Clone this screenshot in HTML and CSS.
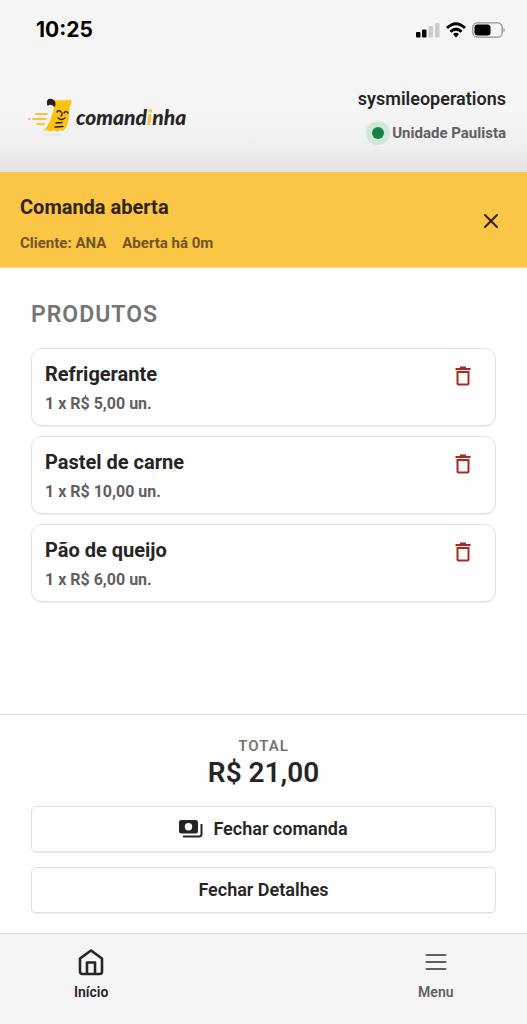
FILE: index.html
```html
<!DOCTYPE html>
<html lang="pt-BR">
<head>
<meta charset="utf-8">
<meta name="viewport" content="width=device-width, initial-scale=1">
<title>Comandinha</title>
<link rel="stylesheet" href="styles.css">
</head>
<body>
<div class="top">
  <div class="status">
    <span class="clock">10:25</span>
    <div class="indicators">
      <svg width="24" height="16" viewBox="0 0 24 16" aria-hidden="true"><rect x="0" y="10" width="4.500" height="5.500" rx="1"/><rect x="6" y="7.500" width="4.500" height="8" rx="1"/><g fill="#ccc"><rect x="12.500" y="4" width="4.500" height="11.500" rx="1"/><rect x="19" y="1" width="4.500" height="14.500" rx="1"/></g></svg>
      <svg width="20" height="16" viewBox="0 0 20 16" fill="none" stroke="#000" stroke-width="2.900" aria-hidden="true"><path d="M1 6Q10-2.500 19 6"/><path d="M4.500 9.800Q10 4.500 15.500 9.800"/><path d="M7 12Q10 9.500 13 12L10 15.500Z" fill="#000" stroke="none"/></svg>
      <svg width="34" height="18" viewBox="0 0 34 18" aria-hidden="true"><rect x=".8" y="1.800" width="29.400" height="14.400" rx="4.500" fill="none" stroke="#929292" stroke-width="1.300"/><rect x="2.500" y="3.500" width="16" height="11" rx="3"/><path d="M31.500 6.500Q34 9 31.500 11.500Z" fill="#929292"/></svg>
    </div>
  </div>
  <header class="header">
    <div class="brand">
      <svg width="48" height="38" viewBox="0 0 48 38" aria-hidden="true">
        <ellipse cx="25" cy="36.500" rx="9" ry="1" fill="#e6e6e6"/>
        <g stroke="#fbc337" stroke-width="1.800" stroke-linecap="round"><path d="M8 16H19M5 21H18M9 26H16"/><path d="M1 21H1.500" stroke-width="2.200"/></g>
        <path d="M23 1C29 3 36 2 41 2Q44 1 43.500 5C40 11 42 18 40 24Q39 30 35 33L32 32L29 34L26 32L22 34L19 32L15 33C21 28 22 22 24 17C26 13 27 8 23 1Z" fill="#ffc20e"/>
        <path d="M19 6Q18 0 24 1Q29 3 27 9Q22 5 20 8Q19 7 19 6Z" fill="#222"/>
        <g fill="none" stroke="#292313" stroke-width="1.400" stroke-linecap="round"><path d="M29 14Q31 11 33 14M36 15Q38 12 40 15M34 15Q34 18 33 18M30 20Q33 23 37 20M28 25L34 24.500M27 29L35 28.500"/></g>
      </svg>
      <span class="wordmark">comand<span class="accent">i</span>nha</span>
    </div>
    <div class="account">
      <div class="user">sysmileoperations</div>
      <div class="unit"><span class="online"></span>Unidade Paulista</div>
    </div>
  </header>
</div>
<section class="banner">
  <div>
    <h1 class="banner-title">Comanda aberta</h1>
    <div class="banner-meta"><span>Cliente: ANA</span><span>Aberta há 0m</span></div>
  </div>
  <button class="close" type="button" aria-label="Fechar"><svg width="16" height="16" viewBox="0 0 16 16" fill="none" stroke="currentColor" stroke-width="2" stroke-linecap="round"><path d="M2 2L14 14M14 2L2 14"/></svg></button>
</section>
<main class="products">
  <h2 class="section-title">PRODUTOS</h2>
  <ul class="list">
    <li class="item"><div><h3 class="name">Refrigerante</h3><p class="price">1 x R$ 5,00 un.</p></div><button class="trash" type="button" aria-label="Excluir Refrigerante"><svg width="16" height="20" viewBox="0 0 16 20" fill="none" stroke="currentColor" stroke-width="2"><path d="M0.500 3H15.500M5 1.500H11"/><path d="M2.500 6H13.500V17.500Q13.500 18.500 12.500 18.500H3.500Q2.500 18.500 2.500 17.500Z"/></svg></button></li>
    <li class="item"><div><h3 class="name">Pastel de carne</h3><p class="price">1 x R$ 10,00 un.</p></div><button class="trash" type="button" aria-label="Excluir Pastel de carne"><svg width="16" height="20" viewBox="0 0 16 20" fill="none" stroke="currentColor" stroke-width="2"><path d="M0.500 3H15.500M5 1.500H11"/><path d="M2.500 6H13.500V17.500Q13.500 18.500 12.500 18.500H3.500Q2.500 18.500 2.500 17.500Z"/></svg></button></li>
    <li class="item"><div><h3 class="name">Pão de queijo</h3><p class="price">1 x R$ 6,00 un.</p></div><button class="trash" type="button" aria-label="Excluir Pão de queijo"><svg width="16" height="20" viewBox="0 0 16 20" fill="none" stroke="currentColor" stroke-width="2"><path d="M0.500 3H15.500M5 1.500H11"/><path d="M2.500 6H13.500V17.500Q13.500 18.500 12.500 18.500H3.500Q2.500 18.500 2.500 17.500Z"/></svg></button></li>
  </ul>
</main>
<section class="summary">
  <div class="total-label">TOTAL</div>
  <div class="total">R$ 21,00</div>
  <div class="actions">
    <button class="action" type="button"><svg width="24" height="18" viewBox="0 0 24 18" aria-hidden="true"><path fill="currentColor" fill-rule="evenodd" d="M2.500 0H16.500Q19 0 19 2.500V11Q19 13.500 16.500 13.500H2.500Q0 13.500 0 11V2.500Q0 0 2.500 0ZM9.500 3A3.700 3.700 0 1 0 9.500 10.400A3.700 3.700 0 1 0 9.500 3Z"/><path d="M22.500 4V14Q22.500 16.500 20 16.500H4" fill="none" stroke="currentColor" stroke-width="2"/></svg>Fechar comanda</button>
    <button class="action" type="button">Fechar Detalhes</button>
  </div>
</section>
<nav class="nav">
  <a class="tab active" href="#inicio"><svg width="28" height="28" viewBox="0 0 28 28" fill="none" stroke="currentColor" stroke-width="2.600" stroke-linejoin="round" aria-hidden="true"><path d="M14 2.500L25 10.500V23.500Q25 26 22.500 26H5.500Q3 26 3 23.500V10.500Z"/><path d="M10 26V14.500H18V26"/></svg>Início</a>
  <a class="tab menu" href="#menu"><svg width="28" height="28" viewBox="0 0 28 28" fill="none" stroke="currentColor" stroke-width="2" stroke-linecap="round" aria-hidden="true"><path d="M4.500 7H23.500M4.500 14H23.500M4.500 21H23.500"/></svg>Menu</a>
</nav>
</body>
</html>
```

FILE: styles.css
```css
* { box-sizing: border-box; }

body {
  margin: 0;
  min-height: 100vh;
  display: flex;
  flex-direction: column;
  background: #fff;
  color: #252525;
  font-family: Roboto, "Liberation Sans", sans-serif;
  font-weight: 600;
}

h1, h2, h3, p, ul { margin: 0; padding: 0; }
h2, button { font-weight: inherit; }

button {
  border: 0;
  background: none;
  color: inherit;
  font-family: inherit;
  cursor: pointer;
}

svg { display: block; flex: none; }

.top { background: linear-gradient(#f5f5f5 65%, #f0f0f1 85%, #e3e3e5); }

.status {
  display: flex;
  align-items: center;
  justify-content: space-between;
  height: 60px;
  padding: 0 21px 0 36px;
}

.clock {
  color: #000;
  font: 700 21px/24px Inter, sans-serif;
}

.indicators { display: flex; align-items: center; gap: 6px; }

.header {
  display: flex;
  align-items: center;
  justify-content: space-between;
  padding: 25px 21px 27px 28px;
}

.brand { display: flex; align-items: center; padding-top: 4px; }

.wordmark {
  color: #252525;
  font: italic 900 21px/24px Lato, sans-serif;
}

.accent { color: #fbc337; }

.account { text-align: right; }
.user { font-size: 18px; line-height: 28px; }

.unit {
  display: flex;
  align-items: center;
  justify-content: flex-end;
  gap: 8px;
  margin-top: 8px;
  color: #606060;
  font-size: 15px;
  font-weight: 700;
  line-height: 24px;
}

.online {
  width: 12px;
  height: 12px;
  border-radius: 50%;
  background: #158443;
  box-shadow: 0 0 0 6px #d3e6da;
}

.banner {
  display: flex;
  align-items: center;
  justify-content: space-between;
  padding: 20px 20px 14px;
  background: #fbc546;
  border-bottom: 1px solid #f8d889;
  color: #30240f;
}

.banner-title { font-size: 20px; line-height: 30px; }

.banner-meta {
  display: flex;
  gap: 16px;
  margin-top: 11px;
  color: #6f561e;
  font-size: 15px;
  font-weight: 700;
  line-height: 20px;
}

.close { padding: 8px 8px 12px; }

.products { flex: 1; padding: 33px 31px; }

.section-title {
  color: #757575;
  font-size: 23px;
  line-height: 28px;
  letter-spacing: 1px;
}

.list {
  display: grid;
  gap: 10px;
  margin-top: 19px;
  list-style: none;
}

.item {
  display: flex;
  align-items: flex-start;
  justify-content: space-between;
  padding: 11px 13px;
  border: 1px solid #e2e2e2;
  border-radius: 11px;
  box-shadow: 0 1px 1px #eee;
}

.name { font-size: 20px; line-height: 28px; }

.price {
  margin-top: 6px;
  color: #606060;
  font-size: 16px;
  font-weight: 700;
  line-height: 20px;
}

.trash { padding: 6px 11px; color: #b3261e; }

.summary {
  padding: 19px 31px 20px;
  border-top: 1px solid #dedede;
  text-align: center;
}

.total-label {
  color: #757575;
  font-size: 15px;
  line-height: 24px;
  letter-spacing: 1px;
}

.total { font-size: 28px; line-height: 30px; }

.actions { display: grid; gap: 15px; margin-top: 18px; }

.action {
  display: flex;
  align-items: center;
  justify-content: center;
  gap: 10px;
  padding: 10px;
  border: 1px solid #e2e2e2;
  border-radius: 5px;
  box-shadow: 0 1px 0 #eee;
  font-size: 18px;
  line-height: 24px;
}

.nav {
  display: grid;
  grid-template-columns: repeat(3, 1fr);
  padding: 14px 5px 22px;
  background: #f5f5f5;
  border-top: 1px solid #dadada;
}

.tab {
  display: flex;
  flex-direction: column;
  align-items: center;
  gap: 6px;
  color: #606060;
  font-size: 14px;
  line-height: 20px;
  text-decoration: none;
}

.active { color: #252525; }
.menu { grid-column: 3; }
```
